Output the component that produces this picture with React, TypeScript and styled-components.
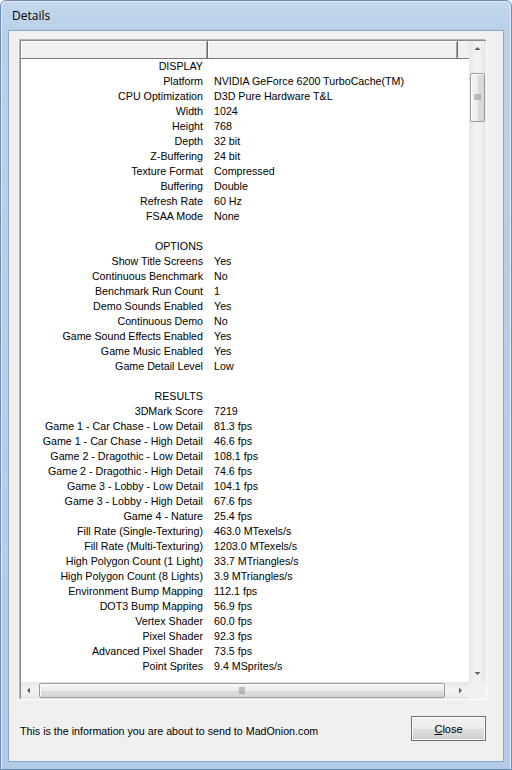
import styled, { createGlobalStyle } from "styled-components";

const GlobalStyle = createGlobalStyle`
  html, body {
    margin: 0;
    padding: 0;
    background: #ffffff;
  }
  * {
    box-sizing: border-box;
  }
`;

type Entry = { label: string; value?: string };

const ROWS: Entry[] = [
  { label: "DISPLAY" },
  { label: "Platform", value: "NVIDIA GeForce 6200 TurboCache(TM)" },
  { label: "CPU Optimization", value: "D3D Pure Hardware T&L" },
  { label: "Width", value: "1024" },
  { label: "Height", value: "768" },
  { label: "Depth", value: "32 bit" },
  { label: "Z-Buffering", value: "24 bit" },
  { label: "Texture Format", value: "Compressed" },
  { label: "Buffering", value: "Double" },
  { label: "Refresh Rate", value: "60 Hz" },
  { label: "FSAA Mode", value: "None" },
  { label: "" },
  { label: "OPTIONS" },
  { label: "Show Title Screens", value: "Yes" },
  { label: "Continuous Benchmark", value: "No" },
  { label: "Benchmark Run Count", value: "1" },
  { label: "Demo Sounds Enabled", value: "Yes" },
  { label: "Continuous Demo", value: "No" },
  { label: "Game Sound Effects Enabled", value: "Yes" },
  { label: "Game Music Enabled", value: "Yes" },
  { label: "Game Detail Level", value: "Low" },
  { label: "" },
  { label: "RESULTS" },
  { label: "3DMark Score", value: "7219" },
  { label: "Game 1 - Car Chase - Low Detail", value: "81.3 fps" },
  { label: "Game 1 - Car Chase - High Detail", value: "46.6 fps" },
  { label: "Game 2 - Dragothic - Low Detail", value: "108.1 fps" },
  { label: "Game 2 - Dragothic - High Detail", value: "74.6 fps" },
  { label: "Game 3 - Lobby - Low Detail", value: "104.1 fps" },
  { label: "Game 3 - Lobby - High Detail", value: "67.6 fps" },
  { label: "Game 4 - Nature", value: "25.4 fps" },
  { label: "Fill Rate (Single-Texturing)", value: "463.0 MTexels/s" },
  { label: "Fill Rate (Multi-Texturing)", value: "1203.0 MTexels/s" },
  { label: "High Polygon Count (1 Light)", value: "33.7 MTriangles/s" },
  { label: "High Polygon Count (8 Lights)", value: "3.9 MTriangles/s" },
  { label: "Environment Bump Mapping", value: "112.1 fps" },
  { label: "DOT3 Bump Mapping", value: "56.9 fps" },
  { label: "Vertex Shader", value: "60.0 fps" },
  { label: "Pixel Shader", value: "92.3 fps" },
  { label: "Advanced Pixel Shader", value: "73.5 fps" },
  { label: "Point Sprites", value: "9.4 MSprites/s" },
];

const LABEL_COL = 187;
const VALUE_COL = 250;

const Window = styled.div`
  width: 512px;
  height: 770px;
  display: flex;
  flex-direction: column;
  padding: 0 7px 7px 7px;
  border: 1px solid #6d8bb0;
  border-radius: 6px 6px 0 0;
  background: linear-gradient(to bottom, #c4d7ee 0px, #bad0ea 30px, #b2cbe8 100%);
  box-shadow: inset 1px 1px 0 #e4edf8, inset -1px 0 0 #e4edf8;
`;

const TitleBar = styled.div`
  height: 29px;
  display: flex;
  align-items: center;
  padding-left: 4px;
  font-family: "Open Sans", "Noto Sans", sans-serif;
  font-size: 12px;
  color: #000;
`;

const Client = styled.div`
  flex: 1;
  display: flex;
  flex-direction: column;
  background: #f0f0f0;
  border: 1px solid #8ea7c6;
  padding: 9px 0 0 11px;
  font-family: "Liberation Sans", Arial, sans-serif;
  font-size: 10.7px;
  color: #000;
`;

const ListView = styled.div`
  width: 466px;
  height: 659px;
  display: grid;
  grid-template-columns: 1fr 17px;
  grid-template-rows: 1fr 17px;
  border-style: solid;
  border-width: 1px 0 0 1px;
  border-color: #8c8c8c;
  box-shadow: 1px 1px 0 #ffffff, -1px -1px 0 #b4b4b4;
  background: #ffffff;
`;

const ListPane = styled.div`
  overflow: hidden;
  background: #ffffff;
`;

const HeaderRow = styled.div`
  display: flex;
  height: 18px;
  background: #f0f0f0;
  border-bottom: 1px solid #7a7a7a;
`;

const HeaderCell = styled.div<{ $width?: number }>`
  width: ${(p) => (p.$width ? `${p.$width}px` : "auto")};
  flex: ${(p) => (p.$width ? "none" : "1")};
  border-right: ${(p) => (p.$width ? "1px solid #6e6e6e" : "none")};
  box-shadow: ${(p) => (p.$width ? "inset 1px 1px 0 #ffffff, inset -1px 0 0 #a0a0a0" : "none")};
`;

const Row = styled.div`
  display: flex;
  height: 15px;
  line-height: 15px;
  white-space: nowrap;
`;

const LabelCell = styled.div`
  width: ${LABEL_COL}px;
  flex: none;
  text-align: right;
  padding-right: 5px;
`;

const ValueCell = styled.div`
  width: ${VALUE_COL}px;
  flex: none;
  padding-left: 6px;
`;

const VScroll = styled.div`
  display: flex;
  flex-direction: column;
  background: linear-gradient(to right, #e6e6e6, #f2f2f2 40%, #f2f2f2 60%, #e6e6e6);
`;

const HScroll = styled.div`
  display: flex;
  background: linear-gradient(to bottom, #e6e6e6, #f2f2f2 40%, #f2f2f2 60%, #e6e6e6);
`;

const Corner = styled.div`
  background: #f0f0f0;
`;

const ArrowBox = styled.div`
  width: 17px;
  height: 17px;
  flex: none;
  display: flex;
  align-items: center;
  justify-content: center;
`;

const Track = styled.div<{ $before: number; $vertical?: boolean }>`
  flex: 1;
  display: flex;
  flex-direction: ${(p) => (p.$vertical ? "column" : "row")};
  padding: ${(p) => (p.$vertical ? `${p.$before}px 0 0 0` : `0 0 0 ${p.$before}px`)};
`;

const Thumb = styled.div<{ $size: number; $vertical?: boolean }>`
  ${(p) => (p.$vertical ? `height: ${p.$size}px; width: 15px; margin-left: 1px;` : `width: ${p.$size}px; height: 15px; margin-top: 1px;`)}
  flex: none;
  display: flex;
  align-items: center;
  justify-content: center;
  border: 1px solid #9b9b9b;
  border-radius: 2px;
  background: ${(p) =>
    p.$vertical
      ? "linear-gradient(to right, #f5f5f5, #ececec 50%, #dcdcdc 51%, #d6d6d6)"
      : "linear-gradient(to bottom, #f5f5f5, #ececec 50%, #dcdcdc 51%, #d6d6d6)"};
  box-shadow: inset 1px 1px 0 #ffffff;
`;

const Footer = styled.div`
  flex: 1;
  display: flex;
  align-items: center;
  justify-content: space-between;
  padding: 0 17px 4px 0;
`;

const Note = styled.span`
  margin-top: 6px;
`;

const CloseButton = styled.button`
  width: 75px;
  height: 25px;
  margin-top: 1px;
  border: 1px solid #707070;
  border-radius: 0;
  background: linear-gradient(to bottom, #f2f2f2, #ebebeb 50%, #dddddd 51%, #cfcfcf);
  box-shadow: inset 0 0 0 1px #fcfcfc;
  font-family: "Liberation Sans", Arial, sans-serif;
  font-size: 11px;
  color: #000;
  padding: 0;

  u {
    text-decoration: underline;
  }
`;

const Arrow = ({ dir }: { dir: "up" | "down" | "left" | "right" }) => {
  const pts = {
    up: "1.5,5 4.5,2 7.5,5",
    down: "1.5,3 4.5,6 7.5,3",
    left: "5,1.5 2,4.5 5,7.5",
    right: "3,1.5 6,4.5 3,7.5",
  }[dir];
  return (
    <svg width="9" height="9" viewBox="0 0 9 9">
      <polygon points={pts} fill="#606060" />
    </svg>
  );
};

const Grip = ({ vertical }: { vertical?: boolean }) => (
  <svg width="7" height="7" viewBox="0 0 7 7">
    {[0, 2, 4].map((o) =>
      vertical ? (
        <rect key={o} x="0" y={o + 0.5} width="7" height="1" fill="#8a8a8a" />
      ) : (
        <rect key={o} x={o + 0.5} y="0" width="1" height="7" fill="#8a8a8a" />
      )
    )}
  </svg>
);

export default function App() {
  return (
    <>
      <GlobalStyle />
      <Window>
        <TitleBar>Details</TitleBar>
        <Client>
          <ListView>
            <ListPane>
              <HeaderRow>
                <HeaderCell $width={LABEL_COL} />
                <HeaderCell $width={VALUE_COL} />
                <HeaderCell />
              </HeaderRow>
              {ROWS.map((r, i) => (
                <Row key={i}>
                  <LabelCell>{r.label}</LabelCell>
                  <ValueCell>{r.value ?? ""}</ValueCell>
                </Row>
              ))}
            </ListPane>
            <VScroll>
              <ArrowBox>
                <Arrow dir="up" />
              </ArrowBox>
              <Track $vertical $before={15}>
                <Thumb $vertical $size={49}>
                  <Grip vertical />
                </Thumb>
              </Track>
              <ArrowBox>
                <Arrow dir="down" />
              </ArrowBox>
            </VScroll>
            <HScroll>
              <ArrowBox>
                <Arrow dir="left" />
              </ArrowBox>
              <Track $before={1}>
                <Thumb $size={406}>
                  <Grip />
                </Thumb>
              </Track>
              <ArrowBox>
                <Arrow dir="right" />
              </ArrowBox>
            </HScroll>
            <Corner />
          </ListView>
          <Footer>
            <Note>This is the information you are about to send to MadOnion.com</Note>
            <CloseButton>
              <u>C</u>lose
            </CloseButton>
          </Footer>
        </Client>
      </Window>
    </>
  );
}
